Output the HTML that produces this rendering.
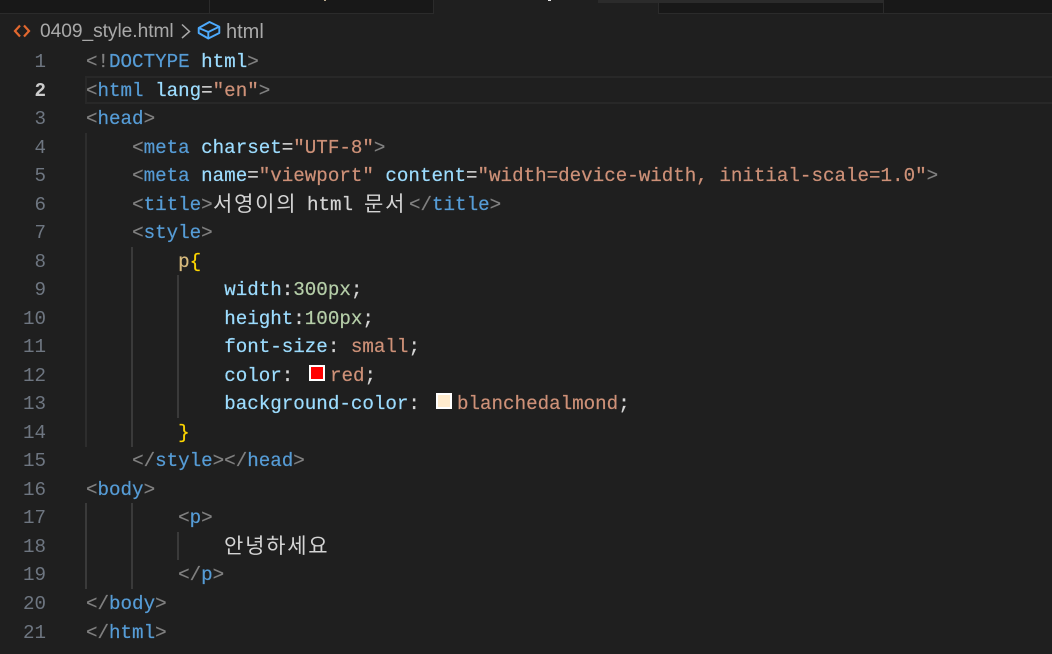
<!DOCTYPE html>
<html lang="ko">
<head>
<meta charset="UTF-8">
<title>0409_style.html</title>
<style>
html,body{margin:0;padding:0;width:1052px;height:654px;overflow:hidden;background:#1f1f1f}
.r{position:absolute}
.l{position:absolute;left:86px;height:28px;font:19.2px/28px "Liberation Mono","Noto Sans CJK KR",monospace;white-space:pre;color:#d4d4d4;-webkit-text-stroke:.2px currentColor}
.n{position:absolute;left:0;width:46px;text-align:right;height:28px;font:19.2px/28px "Liberation Mono",monospace;color:#6e7681}
.ko{font-family:"Noto Sans CJK KR",sans-serif;font-size:21px;letter-spacing:1.75px;-webkit-text-stroke:0}
.g{color:#808080}.b{color:#569cd6}.a{color:#9cdcfe}.s{color:#ce9178}.h{color:#569cd6}.y{color:#ffd700}.o{color:#d7ba7d}.c{color:#b5cea8}.w{color:#d4d4d4}
.i{position:absolute;width:2px;background:#3a3a3a}
.sw{position:absolute;width:12px;height:12px;border:2px solid #fff}
.bc{position:absolute;top:20px;height:24px;font:19.2px/24px "Liberation Sans",sans-serif;color:#a9a9a9;white-space:pre}
</style>
</head>
<body>
<div class="r" style="left:0;top:0;width:434px;height:13px;background:#181818"></div>
<div class="r" style="left:0;top:13px;width:434px;height:1px;background:#2b2b2b"></div>
<div class="r" style="left:209px;top:0;width:1px;height:13px;background:#2b2b2b"></div>
<div class="r" style="left:433px;top:0;width:1px;height:14px;background:#2b2b2b"></div>
<div class="r" style="left:658px;top:2px;width:394px;height:11px;background:#181818"></div>
<div class="r" style="left:658px;top:13px;width:394px;height:1px;background:#2b2b2b"></div>
<div class="r" style="left:658px;top:2px;width:1px;height:11px;background:#2b2b2b"></div>
<div class="r" style="left:884px;top:0;width:168px;height:13px;background:#181818"></div>
<div class="r" style="left:883px;top:0;width:1px;height:13px;background:#2b2b2b"></div>
<div class="r" style="left:598px;top:0;width:286px;height:3px;background:#2b2b2b"></div>
<div class="r" style="left:324px;top:0;width:2px;height:1px;background:#b9a98c"></div>
<div class="r" style="left:548px;top:0;width:3px;height:1px;background:#e8e8e8"></div>

<svg style="position:absolute;left:12px;top:22px" width="20" height="18" viewBox="0 0 20 18" fill="none" stroke="#e2682f" stroke-width="2.2"><path d="M8 3.5 L3 9 L8 14.5"/><path d="M12 3.5 L17 9 L12 14.5"/></svg>
<div class="bc" style="left:40px;letter-spacing:-.05px">0409_style.html</div>
<svg style="position:absolute;left:180px;top:22px" width="14" height="18" viewBox="0 0 14 18" fill="none" stroke="#a9a9a9" stroke-width="1.5"><path d="M2 2.5 L9.5 9.5 L2 16"/></svg>
<svg style="position:absolute;left:197px;top:20px" width="24" height="20" viewBox="0 0 24 20" fill="none" stroke="#4daafc" stroke-width="1.9" stroke-linejoin="round"><path d="M1.7 8 L12.5 2 L22.3 6.7 L22.3 13 L11.3 18.5 L1.7 13 Z"/><path d="M1.7 8 L11.3 12 L22.3 6.7"/><path d="M11.3 12 V18.5"/></svg>
<div class="bc" style="left:226px;font-size:20px">html</div>

<div class="r" style="left:85px;top:76px;width:967px;height:28px;box-sizing:border-box;border:2px solid #282828;border-right:none"></div>

<div class="i" style="left:85px;top:133px;height:314px;background:#2d2d2d"></div>
<div class="i" style="left:131px;top:247px;height:200px"></div>
<div class="i" style="left:177px;top:275px;height:143px"></div>
<div class="i" style="left:85px;top:503px;height:86px"></div>
<div class="i" style="left:131px;top:503px;height:86px"></div>
<div class="i" style="left:177px;top:532px;height:28px"></div>

<div class="n" style="top:48px">1</div><div class="l" style="top:48px"><span class="g">&lt;!</span><span class="b">DOCTYPE</span> <span class="a">html</span><span class="g">&gt;</span></div>
<div class="n" style="top:77px;color:#cccccc;font-weight:bold">2</div><div class="l" style="top:77px"><span class="g">&lt;</span><span class="h">html</span> <span class="a">lang</span><span class="w">=</span><span class="s">"en"</span><span class="g">&gt;</span></div>
<div class="n" style="top:105px">3</div><div class="l" style="top:105px"><span class="g">&lt;</span><span class="h">head</span><span class="g">&gt;</span></div>
<div class="n" style="top:134px">4</div><div class="l" style="top:134px">    <span class="g">&lt;</span><span class="h">meta</span> <span class="a">charset</span><span class="w">=</span><span class="s">"UTF-8"</span><span class="g">&gt;</span></div>
<div class="n" style="top:162px">5</div><div class="l" style="top:162px">    <span class="g">&lt;</span><span class="h">meta</span> <span class="a">name</span><span class="w">=</span><span class="s">"viewport"</span> <span class="a">content</span><span class="w">=</span><span class="s">"width=device-width, initial-scale=1.0"</span><span class="g">&gt;</span></div>
<div class="n" style="top:191px">6</div><div class="l" style="top:191px">    <span class="g">&lt;</span><span class="h">title</span><span class="g">&gt;</span></div>
<div class="l ko" style="top:189px;left:213px">서영이의</div>
<div class="l" style="top:191px;left:307px">html</div>
<div class="l ko" style="top:189px;left:364px">문서</div>
<div class="l" style="top:191px;left:409px"><span class="g">&lt;/</span><span class="h">title</span><span class="g">&gt;</span></div>
<div class="n" style="top:219px">7</div><div class="l" style="top:219px">    <span class="g">&lt;</span><span class="h">style</span><span class="g">&gt;</span></div>
<div class="n" style="top:248px">8</div><div class="l" style="top:248px">        <span class="o">p</span><span class="y">{</span></div>
<div class="n" style="top:276px">9</div><div class="l" style="top:276px">            <span class="a">width</span><span class="w">:</span><span class="c">300px</span><span class="w">;</span></div>
<div class="n" style="top:305px">10</div><div class="l" style="top:305px">            <span class="a">height</span><span class="w">:</span><span class="c">100px</span><span class="w">;</span></div>
<div class="n" style="top:333px">11</div><div class="l" style="top:333px">            <span class="a">font-size</span><span class="w">:</span> <span class="s">small</span><span class="w">;</span></div>
<div class="n" style="top:362px">12</div><div class="l" style="top:362px">            <span class="a">color</span><span class="w">:</span></div>
<div class="sw" style="left:309px;top:365px;background:#ff0000"></div>
<div class="l" style="top:362px;left:330px"><span class="s">red</span><span class="w">;</span></div>
<div class="n" style="top:390px">13</div><div class="l" style="top:390px">            <span class="a">background-color</span><span class="w">:</span></div>
<div class="sw" style="left:436px;top:393px;background:#ffebcd"></div>
<div class="l" style="top:390px;left:457px"><span class="s">blanchedalmond</span><span class="w">;</span></div>
<div class="n" style="top:419px">14</div><div class="l" style="top:419px">        <span class="y">}</span></div>
<div class="n" style="top:447px">15</div><div class="l" style="top:447px">    <span class="g">&lt;/</span><span class="h">style</span><span class="g">&gt;&lt;/</span><span class="h">head</span><span class="g">&gt;</span></div>
<div class="n" style="top:476px">16</div><div class="l" style="top:476px"><span class="g">&lt;</span><span class="h">body</span><span class="g">&gt;</span></div>
<div class="n" style="top:504px">17</div><div class="l" style="top:504px">        <span class="g">&lt;</span><span class="h">p</span><span class="g">&gt;</span></div>
<div class="n" style="top:533px">18</div><div class="l ko" style="top:531px;left:224px">안녕하세요</div>
<div class="n" style="top:561px">19</div><div class="l" style="top:561px">        <span class="g">&lt;/</span><span class="h">p</span><span class="g">&gt;</span></div>
<div class="n" style="top:590px">20</div><div class="l" style="top:590px"><span class="g">&lt;/</span><span class="h">body</span><span class="g">&gt;</span></div>
<div class="n" style="top:619px">21</div><div class="l" style="top:619px"><span class="g">&lt;/</span><span class="h">html</span><span class="g">&gt;</span></div>
</body>
</html>
